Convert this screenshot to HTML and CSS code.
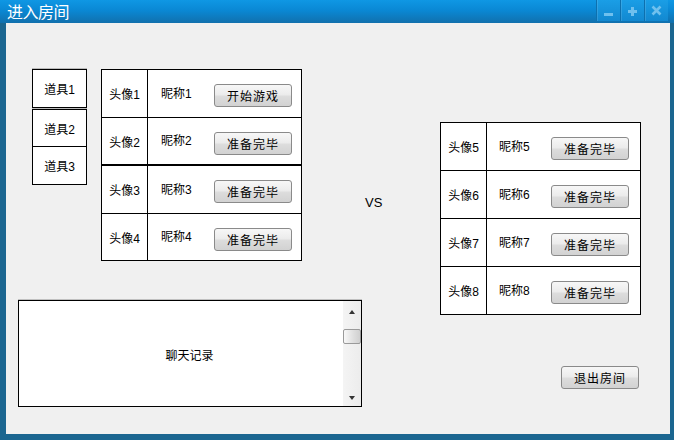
FILE: index.html
```html
<!DOCTYPE html>
<html lang="zh-CN">
<head>
<meta charset="utf-8">
<title>进入房间</title>
<link rel="stylesheet" href="styles.css">
</head>
<body>
<div class="window">
  <div class="titlebar">
    <span class="title">进入房间</span>
    <div class="winbtns">
      <span class="wb"><svg width="24" height="21" viewBox="0 0 24 21"><rect x="8" y="13" width="9" height="3" fill="#6fc0ee"/></svg></span>
      <span class="wb"><svg width="24" height="21" viewBox="0 0 24 21"><rect x="8" y="10" width="9" height="3" fill="#6fc0ee"/><rect x="11" y="7" width="3" height="9" fill="#6fc0ee"/></svg></span>
      <span class="wb"><svg width="24" height="21" viewBox="0 0 24 21"><path d="M8.5 6.5 L16.5 14.5 M16.5 6.5 L8.5 14.5" stroke="#6fc0ee" stroke-width="2.6" fill="none"/></svg></span>
    </div>
  </div>
  <div class="client">
    <div class="col-left">
      <div class="top-row">
        <div class="props">
          <div class="prop p1">道具1</div>
          <div class="prop p2">道具2</div>
          <div class="prop p3">道具3</div>
        </div>
        <div class="team team-a">
          <div class="row"><div class="avatar">头像1</div><div class="info"><span class="nick">昵称1</span><button class="btn">开始游戏</button></div></div>
          <div class="row thick"><div class="avatar">头像2</div><div class="info"><span class="nick">昵称2</span><button class="btn">准备完毕</button></div></div>
          <div class="row"><div class="avatar">头像3</div><div class="info"><span class="nick">昵称3</span><button class="btn">准备完毕</button></div></div>
          <div class="row"><div class="avatar">头像4</div><div class="info"><span class="nick">昵称4</span><button class="btn">准备完毕</button></div></div>
        </div>
      </div>
      <div class="chat">
        <div class="chat-text">聊天记录</div>
        <div class="scrollbar">
          <span class="arrow up"></span>
          <span class="thumb"></span>
          <span class="arrow down"></span>
        </div>
      </div>
    </div>
    <div class="vs">VS</div>
    <div class="col-right">
      <div class="team team-b">
        <div class="row"><div class="avatar">头像5</div><div class="info"><span class="nick">昵称5</span><button class="btn">准备完毕</button></div></div>
        <div class="row"><div class="avatar">头像6</div><div class="info"><span class="nick">昵称6</span><button class="btn">准备完毕</button></div></div>
        <div class="row"><div class="avatar">头像7</div><div class="info"><span class="nick">昵称7</span><button class="btn">准备完毕</button></div></div>
        <div class="row"><div class="avatar">头像8</div><div class="info"><span class="nick">昵称8</span><button class="btn">准备完毕</button></div></div>
      </div>
      <button class="btn exit">退出房间</button>
    </div>
  </div>
</div>
</body>
</html>
```
FILE: styles.css
```css
* { box-sizing: border-box; }
html, body { margin: 0; padding: 0; }
body {
  width: 674px;
  height: 440px;
  overflow: hidden;
  font-family: "Liberation Sans", "Noto Sans CJK SC", sans-serif;
  font-size: 12px;
  color: #000;
  background: #1b6690;
}
.window {
  width: 674px;
  height: 440px;
  display: flex;
  flex-direction: column;
  background: #1b6690;
}
.titlebar {
  height: 23px;
  flex: none;
  display: flex;
  align-items: flex-start;
  background: linear-gradient(to bottom, #0f97e4 0%, #0a88d4 45%, #1170ad 100%);
}
.title {
  color: #fff;
  font-family: "Noto Sans CJK SC", sans-serif;
  font-size: 16px;
  line-height: 23px;
  padding-left: 7px;
  letter-spacing: -0.5px;
}
.winbtns {
  margin-left: auto;
  margin-right: 6px;
  display: flex;
  height: 21px;
}
.wb {
  width: 24px;
  height: 21px;
  display: block;
  background: linear-gradient(to bottom, #1a9ee6, #1288d0);
  border-left: 1px solid #0d70ae;
  box-shadow: inset 1px 0 0 rgba(255,255,255,0.12);
}
.wb svg { display: block; margin-left: -1px; }
.client {
  flex: 1;
  margin: 0 4px 6px 6px;
  background: #f0f0f0;
  display: flex;
  align-items: flex-start;
  padding-left: 12px;
}
.col-left {
  width: 344px;
  display: flex;
  flex-direction: column;
}
.top-row {
  display: flex;
  align-items: flex-start;
  margin-top: 46px;
  padding-left: 14px;
  gap: 14px;
}
.props { width: 55px; display: flex; flex-direction: column; }
.prop {
  background: #fff;
  border: 1px solid #000;
  display: flex;
  align-items: center;
  justify-content: center;
  box-shadow: 0 -1px 0 rgba(0,0,0,0.22);
}
.p1 { height: 39px; margin-bottom: 1px; }
.p2 { height: 38px; }
.p3 { height: 38px; border-top: 0; box-shadow: none; }
.team {
  width: 201px;
  background: #fff;
  border: 1px solid #000;
}
.row {
  height: 48px;
  display: flex;
  border-bottom: 1px solid #000;
}
.row:last-child { border-bottom: 0; height: 46px; }
.row.thick { border-bottom-width: 2px; }
.avatar {
  width: 46px;
  border-right: 1px solid #000;
  display: flex;
  align-items: center;
  justify-content: center;
}
.info {
  flex: 1;
  display: flex;
  align-items: center;
  justify-content: space-between;
  padding: 0 9px 0 13px;
}
.nick { margin-top: -3px; }
.btn {
  width: 78px;
  height: 23px;
  padding: 0;
  margin-top: 4px;
  border: 1px solid #8a8a8a;
  border-radius: 3px;
  background: linear-gradient(to bottom, #f7f7f7 0%, #ececec 45%, #dcdcdc 55%, #d2d2d2 100%);
  font-family: "Liberation Sans", "Noto Sans CJK SC", sans-serif;
  font-size: 12px;
  color: #000;
  letter-spacing: 1px;
}
.team-b .info { padding: 0 11px 0 12px; }
.chat {
  margin-top: 39px;
  height: 107px;
  background: #fff;
  border: 1px solid #000;
  display: flex;
  box-shadow: 0 -1px 0 rgba(0,0,0,0.2);
}
.chat-text {
  flex: 1;
  display: flex;
  align-items: center;
  justify-content: center;
  padding-left: 17px;
  padding-top: 2px;
}
.scrollbar {
  width: 18px;
  background: linear-gradient(to right, #f4f4f4, #ececec);
  display: flex;
  flex-direction: column;
  align-items: center;
  padding-top: 9px;
  padding-bottom: 6px;
}
.arrow {
  width: 0;
  height: 0;
  border-left: 3px solid transparent;
  border-right: 3px solid transparent;
}
.arrow.up { border-bottom: 4px solid #333; }
.arrow.down { border-top: 4px solid #333; margin-top: auto; }
.thumb {
  width: 18px;
  height: 15px;
  margin-top: 15px;
  border: 1px solid #9a9a9a;
  border-radius: 2px;
  background: linear-gradient(to right, #f8f8f8, #dedede 60%, #d0d0d0);
}
.vs {
  margin-left: 3px;
  margin-top: 172px;
  font-size: 13px;
}
.col-right {
  margin-left: auto;
  margin-right: 29px;
  display: flex;
  flex-direction: column;
  align-items: flex-end;
}
.team-b { margin-top: 99px; }
.team-b .row { height: 48px; }
.team-b .row:last-child { height: 47px; }
.exit { margin-top: 51px; margin-right: 2px; }
```
